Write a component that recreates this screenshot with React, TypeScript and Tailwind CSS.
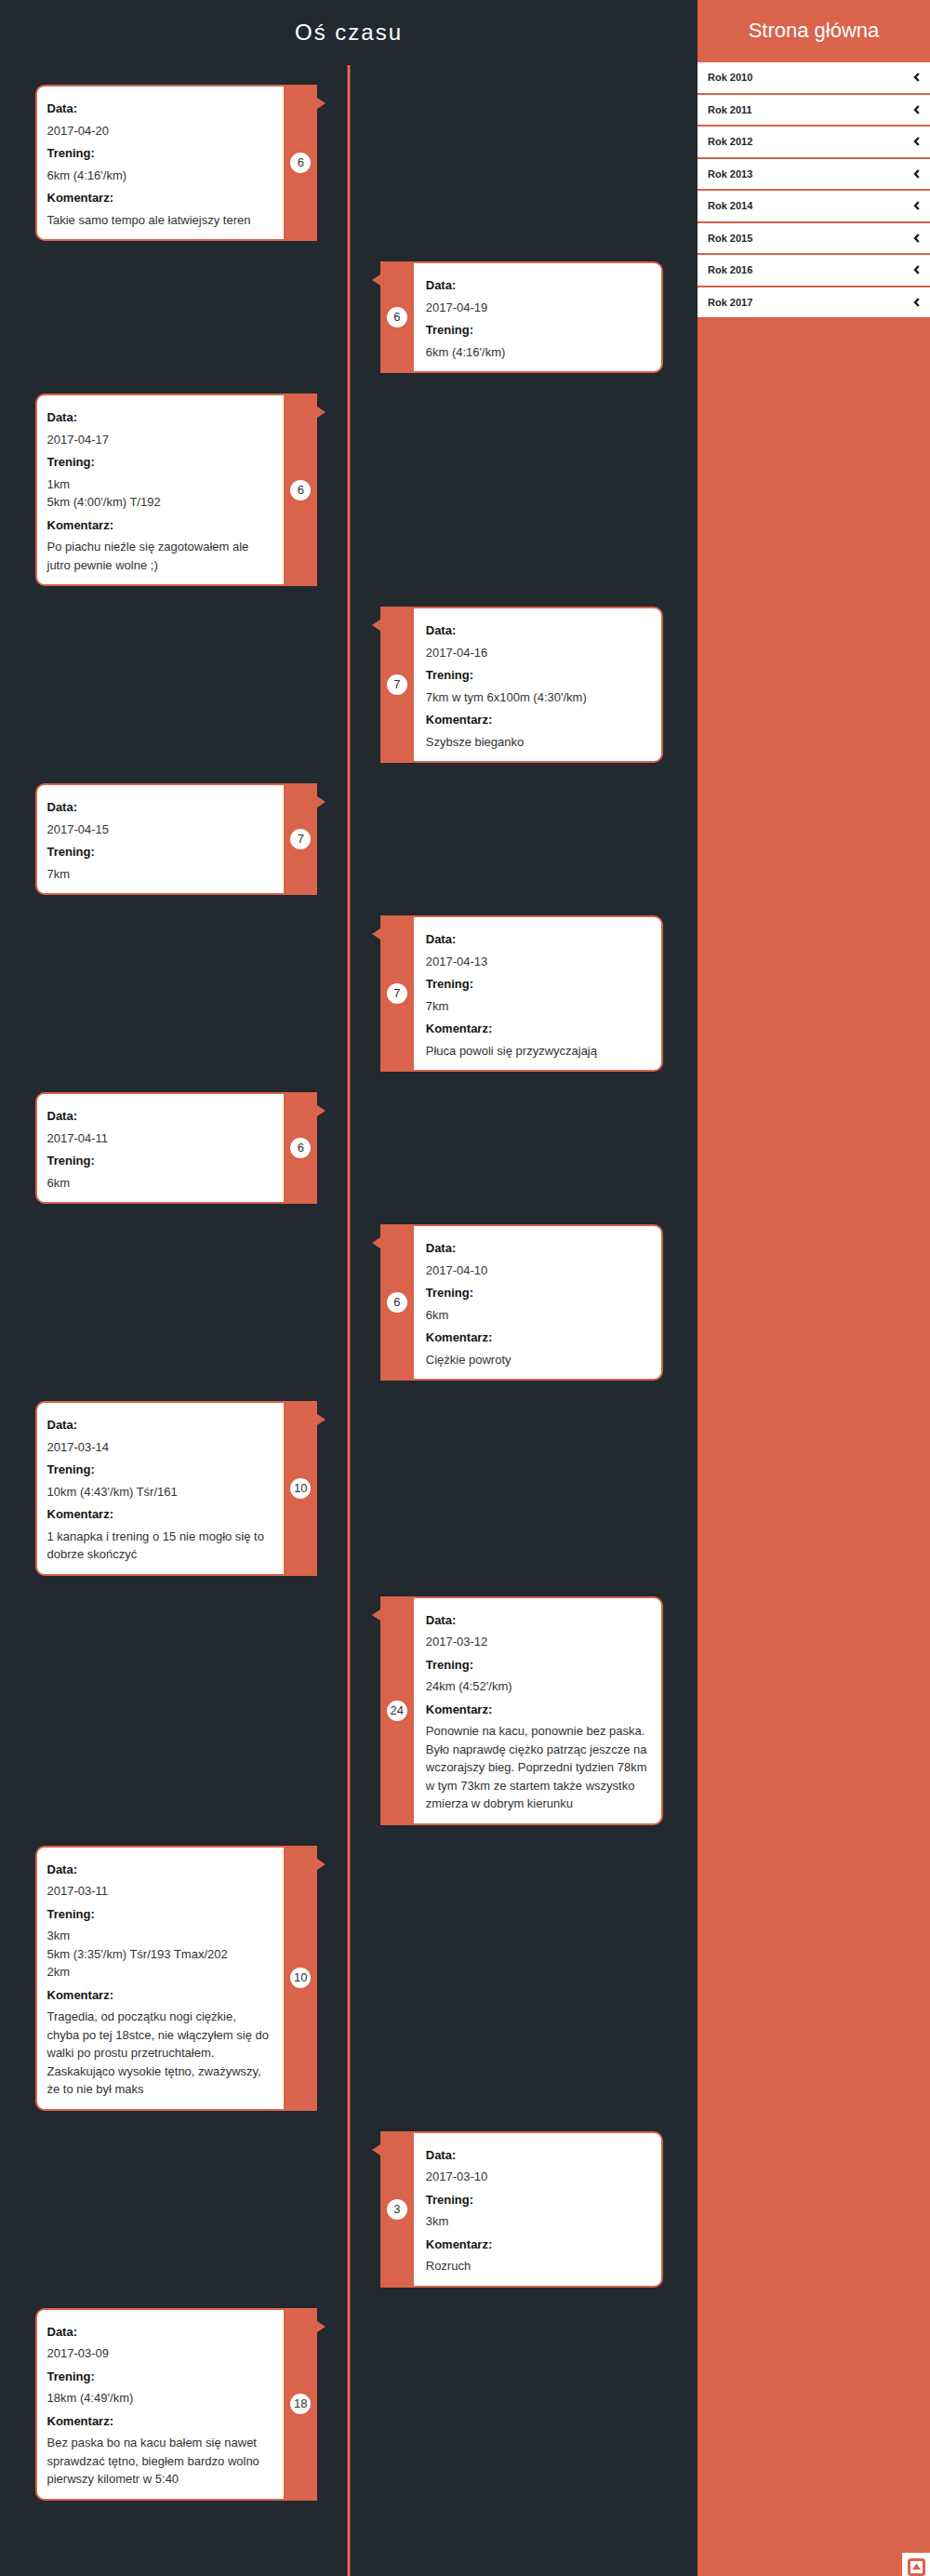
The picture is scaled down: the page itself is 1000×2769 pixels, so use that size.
import React from "react";

type Entry = {
  date: string;
  training: string[];
  comment?: string;
  km: number;
};

const entries: Entry[] = [
  { date: "2017-04-20", training: ["6km (4:16'/km)"], comment: "Takie samo tempo ale łatwiejszy teren", km: 6 },
  { date: "2017-04-19", training: ["6km (4:16'/km)"], km: 6 },
  { date: "2017-04-17", training: ["1km", "5km (4:00'/km) T/192"], comment: "Po piachu nieźle się zagotowałem ale jutro pewnie wolne ;)", km: 6 },
  { date: "2017-04-16", training: ["7km w tym 6x100m (4:30'/km)"], comment: "Szybsze bieganko", km: 7 },
  { date: "2017-04-15", training: ["7km"], km: 7 },
  { date: "2017-04-13", training: ["7km"], comment: "Płuca powoli się przyzwyczajają", km: 7 },
  { date: "2017-04-11", training: ["6km"], km: 6 },
  { date: "2017-04-10", training: ["6km"], comment: "Ciężkie powroty", km: 6 },
  { date: "2017-03-14", training: ["10km (4:43'/km) Tśr/161"], comment: "1 kanapka i trening o 15 nie mogło się to dobrze skończyć", km: 10 },
  { date: "2017-03-12", training: ["24km (4:52'/km)"], comment: "Ponownie na kacu, ponownie bez paska. Było naprawdę ciężko patrząc jeszcze na wczorajszy bieg. Poprzedni tydzien 78km w tym 73km ze startem także wszystko zmierza w dobrym kierunku", km: 24 },
  { date: "2017-03-11", training: ["3km", "5km (3:35'/km) Tśr/193 Tmax/202", "2km"], comment: "Tragedia, od początku nogi ciężkie, chyba po tej 18stce, nie włączyłem się do walki po prostu przetruchtałem. Zaskakująco wysokie tętno, zważywszy, że to nie był maks", km: 10 },
  { date: "2017-03-10", training: ["3km"], comment: "Rozruch", km: 3 },
  { date: "2017-03-09", training: ["18km (4:49'/km)"], comment: "Bez paska bo na kacu bałem się nawet sprawdzać tętno, biegłem bardzo wolno pierwszy kilometr w 5:40", km: 18 },
];

const years = [2010, 2011, 2012, 2013, 2014, 2015, 2016, 2017];

function Field({ label, lines }: { label: string; lines: string[] }) {
  return (
    <div>
      <dt className="mb-1 font-bold text-[#151515]">{label}</dt>
      <dd>
        {lines.map((line) => (
          <p key={line}>{line}</p>
        ))}
      </dd>
    </div>
  );
}

function Card({ entry, side }: { entry: Entry; side: "left" | "right" }) {
  const left = side === "left";
  return (
    <li
      className={
        left
          ? "relative flex w-[45%] self-start rounded-l-[10px] border-y-2 border-l-2 border-[#d9634b] bg-white"
          : "relative flex w-[45%] flex-row-reverse self-end rounded-r-[10px] border-y-2 border-r-2 border-[#d9634b] bg-white"
      }
    >
      <dl
        className={
          left
            ? "flex min-w-0 flex-1 flex-col gap-[5px] pt-[14px] pr-[15px] pb-[11px] pl-[11px]"
            : "flex min-w-0 flex-1 flex-col gap-[5px] pt-[14px] pr-[11px] pb-[11px] pl-[13px]"
        }
      >
        <Field label="Data:" lines={[entry.date]} />
        <Field label="Trening:" lines={entry.training} />
        {entry.comment && <Field label="Komentarz:" lines={[entry.comment]} />}
      </dl>
      <div className="flex w-9 shrink-0 items-center justify-center bg-[#d9634b]">
        <span className="flex size-[22px] items-center justify-center rounded-full bg-white">{entry.km}</span>
      </div>
      <svg
        className={left ? "absolute top-3 left-full h-3 w-[9px]" : "absolute top-3 right-full h-3 w-[9px]"}
        viewBox="0 0 9 12"
        aria-hidden="true"
      >
        <path d={left ? "M0 0L9 6L0 12Z" : "M9 0L0 6L9 12Z"} fill="#d9634b" />
      </svg>
    </li>
  );
}

export default function App() {
  return (
    <div className="flex min-h-screen bg-[#22292f] font-['Liberation_Sans',Arial,sans-serif] text-[13px] leading-normal text-[#333]">
      <main className="flex w-3/4 flex-col">
        <h1 className="pt-[17px] pb-[17px] text-center text-2xl leading-[36px] tracking-[2px] text-white">Oś czasu</h1>
        <div className="relative flex-1">
          <div className="absolute inset-y-0 left-1/2 w-[3px] -translate-x-1/2 bg-[#e5674c]" />
          <ol className="relative flex flex-col gap-[22px] px-[5%] pt-[21px] pb-20">
            {entries.map((entry, i) => (
              <Card key={entry.date} entry={entry} side={i % 2 === 0 ? "left" : "right"} />
            ))}
          </ol>
        </div>
      </main>
      <aside className="w-1/4 bg-[#d9634b]">
        <a href="#" className="block pt-4 pb-[18px] text-center text-[22px] leading-[33px] text-white">
          Strona główna
        </a>
        <ul>
          {years.map((year) => (
            <li key={year} className="border-b-2 border-[#dc6048] bg-white">
              <button
                type="button"
                className="flex w-full items-center justify-between px-[11px] py-2 text-[11px] leading-normal font-bold text-[#23292f]"
              >
                Rok {year}
                <svg className="h-[10px] w-[7px]" viewBox="0 0 7 10" aria-hidden="true">
                  <path d="M5.8 1L2 5L5.8 9" fill="none" stroke="#151b21" strokeWidth="2.4" />
                </svg>
              </button>
            </li>
          ))}
        </ul>
      </aside>
      <a href="#" aria-label="Do góry" className="fixed right-0 bottom-0 flex h-[25px] w-[30px] justify-center bg-white pt-[6px]">
        <svg className="h-[19px] w-[19px]" viewBox="0 0 19 19" aria-hidden="true">
          <rect x="1.5" y="1.5" width="16" height="16" rx="2" fill="none" stroke="#d9634b" strokeWidth="3" />
          <path d="M9.5 5.5L14 12H5Z" fill="#d9634b" />
        </svg>
      </a>
    </div>
  );
}
